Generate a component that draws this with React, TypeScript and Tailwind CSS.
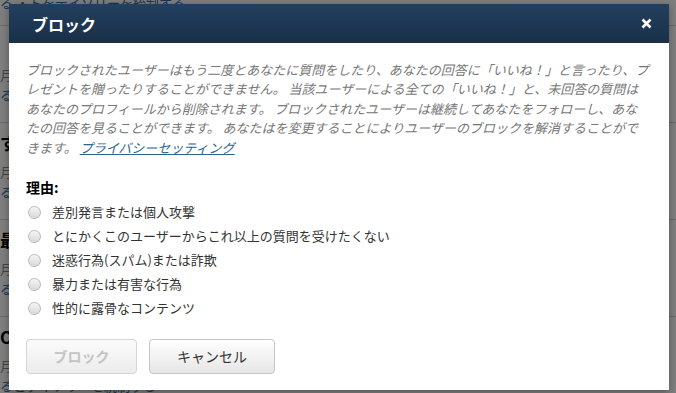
const reasons = [
  "差別発言または個人攻撃",
  "とにかくこのユーザーからこれ以上の質問を受けたくない",
  "迷惑行為(スパム)または詐欺",
  "暴力または有害な行為",
  "性的に露骨なコンテンツ",
];

const feed = [
  { title: "\u3000", date: "月", link: "る" },
  { title: "す", date: "月", link: "る" },
  { title: "最", date: "月", link: "る" },
  { title: "O", date: "月", link: "るとテイソリーを統制する" },
];

function Radio() {
  return (
    <span className="w-[13px] h-[13px] rounded-full border border-[#b9b9b9] bg-gradient-to-b from-[#f4f4f4] to-[#d9d9d9] shrink-0" />
  );
}

export default function App() {
  return (
    <div
      className="relative w-[676px] h-[393px] overflow-hidden bg-white"
      style={{ fontFamily: '"Noto Sans CJK JP", "Noto Sans", sans-serif' }}
    >
      {/* page behind the overlay */}
      <div className="-mt-[5px]">
        <div className="text-[13px] leading-[16px] text-[#2a6ea6] whitespace-nowrap">
          る ・トをデイソリーを統制する
        </div>
        <div className="h-[15px] border-b border-[#d5d5d5]" />
        {feed.map((f, i) => (
          <div key={i} className="h-[97px] border-b border-[#d5d5d5] pt-[9px]">
            <div className="text-[17px] leading-[22px] font-bold text-black">{f.title}</div>
            <div className="mt-[10px] text-[13px] leading-[16px] text-[#888]">{f.date}</div>
            <div className="mt-[4px] text-[13px] leading-[16px] text-[#2a6ea6] whitespace-nowrap">
              {f.link}
            </div>
          </div>
        ))}
      </div>

      {/* overlay */}
      <div className="absolute inset-0 bg-black/50" />

      {/* modal */}
      <div className="absolute left-[9px] top-[4px] w-[660px] h-[386px] bg-white shadow-[0_2px_8px_rgba(0,0,0,0.35)]">
        {/* header */}
        <div className="h-[39px] flex items-center justify-between pl-[23px] pr-[17px] bg-gradient-to-b from-[#22405f] to-[#1a2f48]">
          <span className="text-white text-[16px] font-bold">ブロック</span>
          <svg width="11" height="11" viewBox="0 0 11 11">
            <path d="M1.5 1.5 L9.5 9.5 M9.5 1.5 L1.5 9.5" stroke="white" strokeWidth="2.6" strokeLinecap="butt" />
          </svg>
        </div>

        {/* body */}
        <div className="px-[17px] pt-[17px] pb-[17px]">
          <p className="italic text-[13px] leading-[19.4px] text-[#777] whitespace-nowrap">
            ブロックされたユーザーはもう二度とあなたに質問をしたり、あなたの回答に「いいね！」と言ったり、プ
            <br />
            レゼントを贈ったりすることができません。 当該ユーザーによる全ての「いいね！」と、未回答の質問は
            <br />
            あなたのプロフィールから削除されます。 ブロックされたユーザーは継続してあなたをフォローし、あな
            <br />
            たの回答を見ることができます。 あなたはを変更することによりユーザーのブロックを解消することがで
            <br />
            きます。{" "}
            <a href="#" className="underline text-[#2b6690]">
              プライバシーセッティング
            </a>
          </p>

          <div className="mt-[20px] text-[14px] leading-[20px] font-bold text-black">理由:</div>

          <div className="mt-[3px] flex flex-col">
            {reasons.map((r) => (
              <label key={r} className="h-[24px] flex items-center gap-[11px] pl-[2px]">
                <Radio />
                <span className="text-[13px] text-[#333]">{r}</span>
              </label>
            ))}
          </div>

          <div className="mt-[19px] flex gap-[12px]">
            <button
              disabled
              className="w-[111px] h-[35px] rounded-[4px] border border-[#d6d6d6] bg-gradient-to-b from-[#fbfbfb] to-[#ececec] text-[14px] font-bold text-[#c4c4c4]"
            >
              ブロック
            </button>
            <button className="w-[126px] h-[35px] rounded-[4px] border border-[#c4c4c4] bg-gradient-to-b from-white to-[#e6e6e6] text-[14px] text-[#333]">
              キャンセル
            </button>
          </div>
        </div>
      </div>
    </div>
  );
}
